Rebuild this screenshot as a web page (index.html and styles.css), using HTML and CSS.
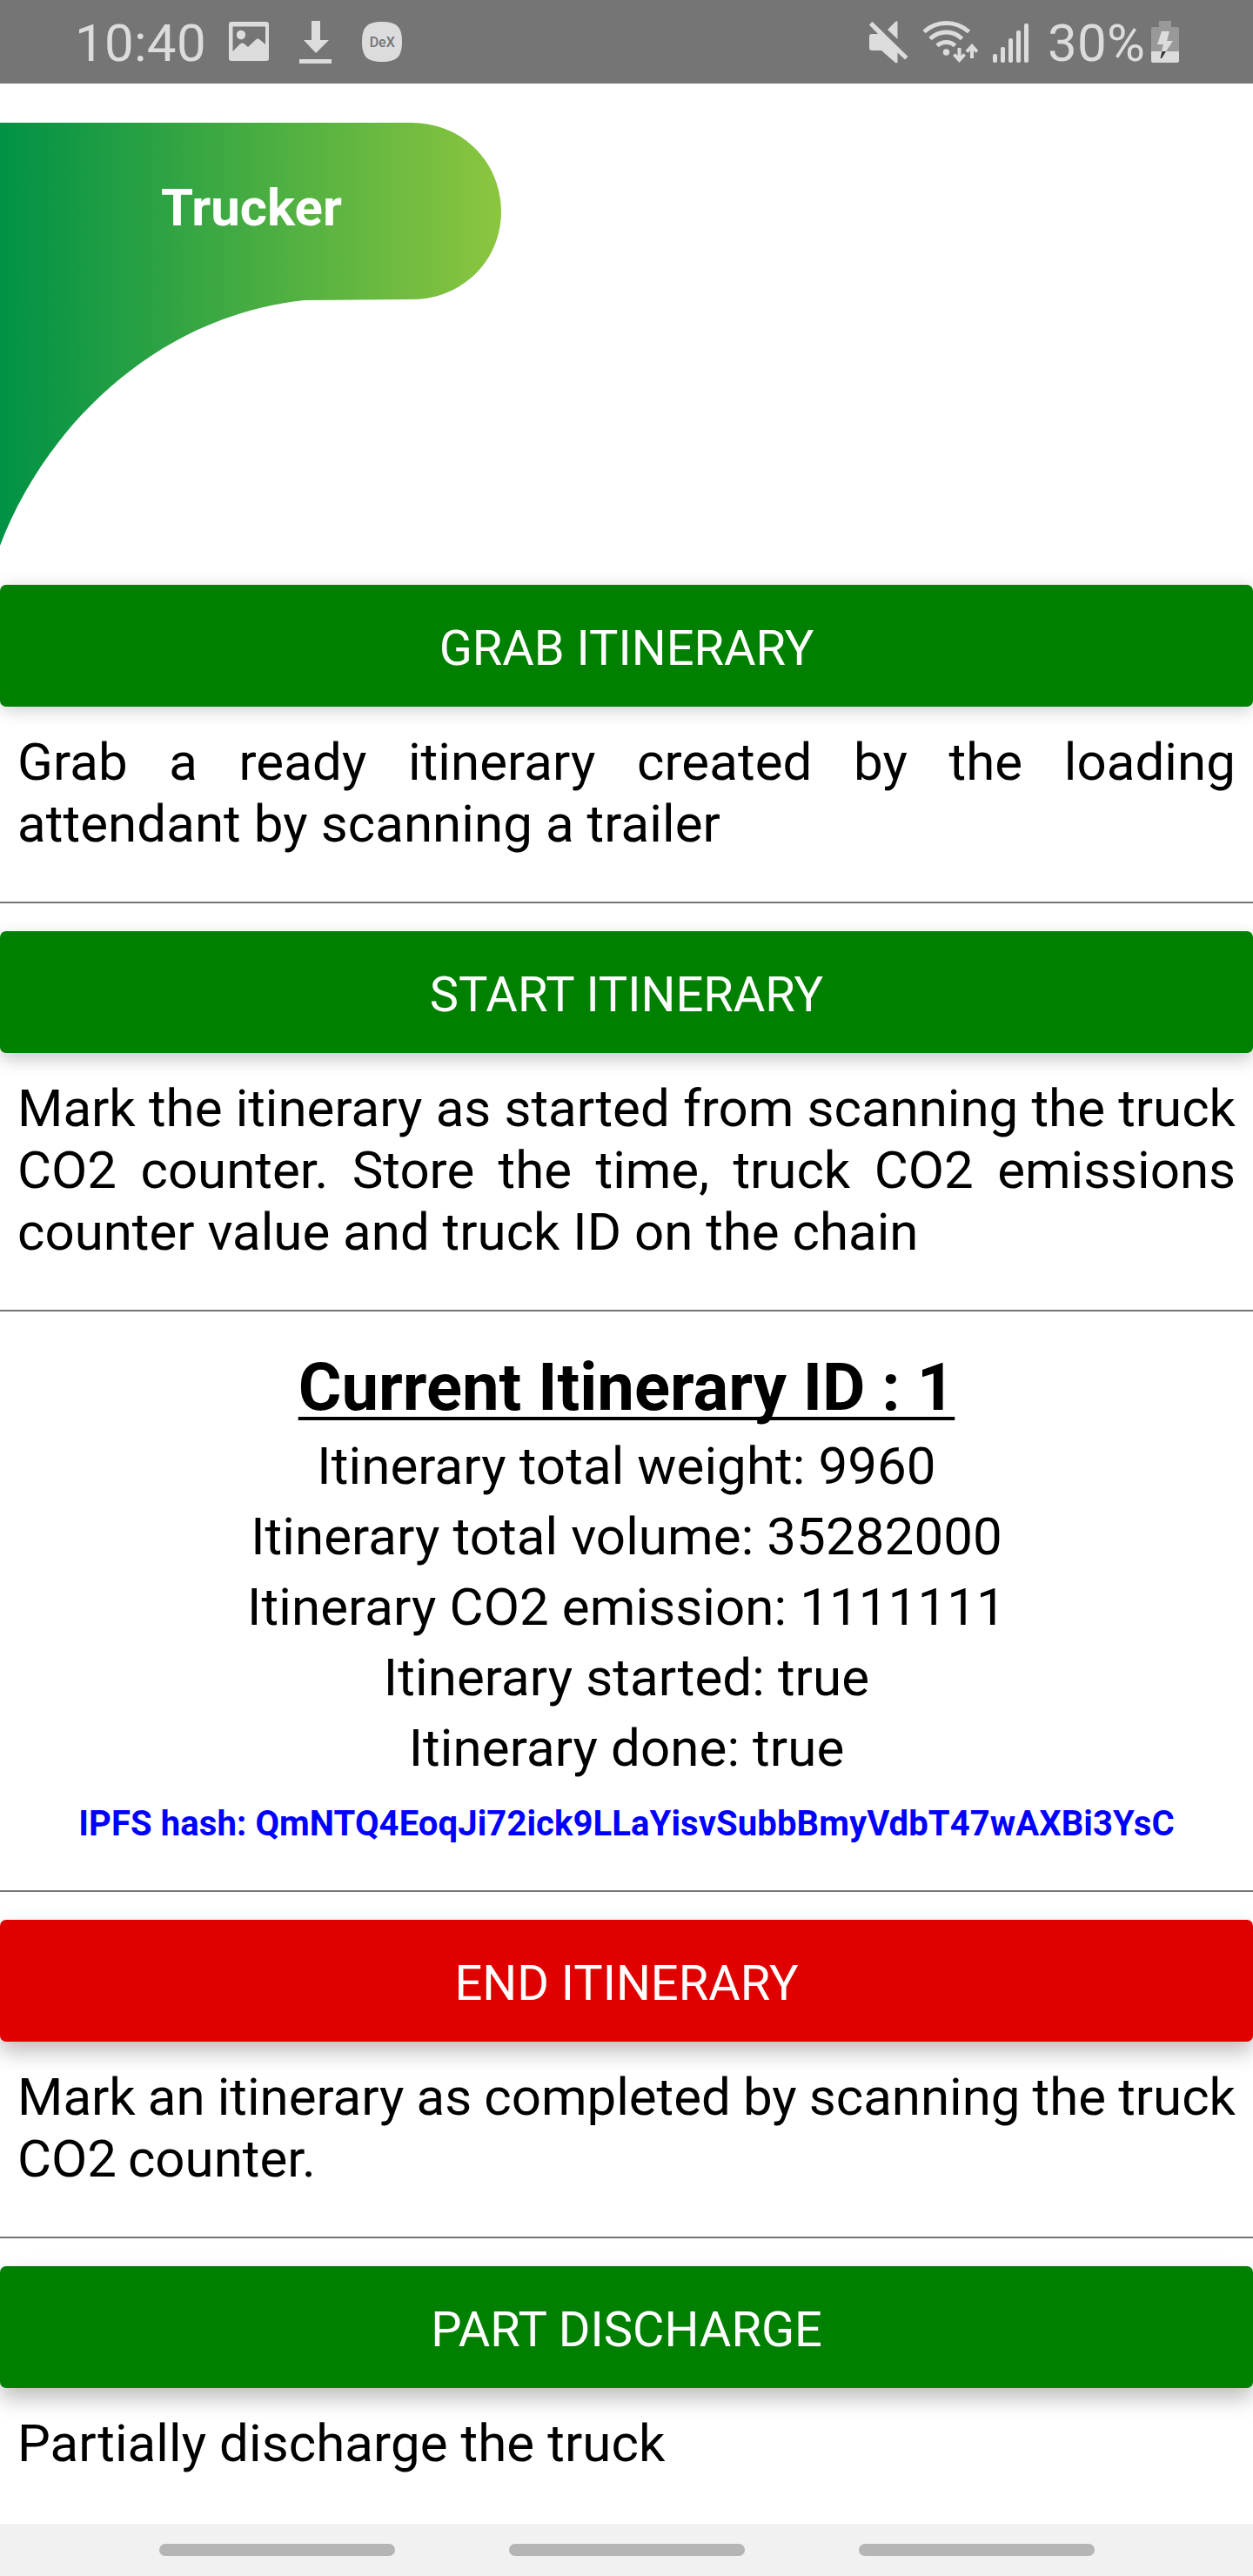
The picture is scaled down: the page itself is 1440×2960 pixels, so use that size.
FILE: index.html
```html
<!DOCTYPE html>
<html lang="en">
<head>
<meta charset="utf-8">
<title>Trucker</title>
<link rel="stylesheet" href="styles.css">
</head>
<body>
<header class="status">
  <span class="clock">10:40</span>
  <svg class="icon-picture" width="48" height="48" viewBox="0 0 48 48"><path fill="currentColor" fill-rule="evenodd" d="M4 1h40q3 0 3 3v39q0 3-3 3H4q-3 0-3-3V4q0-3 3-3zM5.500 6.500V35L14 26.500q2.500-2 5 0L23 30 32 21.500q2.500-2 4.500 0L43 27V6.500z"/><circle cx="15" cy="16" r="5.200" fill="currentColor"/></svg>
  <svg class="icon-download" width="38" height="50" viewBox="0 0 38 50"><path fill="currentColor" d="M14 0h10v22h10L19 37 5 22h9zM0 44h37v5H0z"/></svg>
  <svg class="icon-dex" width="48" height="48" viewBox="0 0 48 48"><path fill="currentColor" d="M24 1C41 1 47 7 47 24S41 47 24 47 1 41 1 24 7 1 24 1z"/><text class="dex-label" x="24.200" y="30" text-anchor="middle">DeX</text></svg>
  <svg class="icon-mute" width="46" height="50" viewBox="0 0 46 50"><g fill="currentColor"><path d="M1 18q0-3 3-3h7L0.800 4.500 4.500 1 45.500 41 42 44.500 33.500 36.500V47.500q-1 1.500-2.500 .500L15 34H4q-3 0-3-3zM22 10 31 1q2.500-1.500 2.500 .500V21z"/></g></svg>
  <svg class="icon-wifi" width="64" height="50" viewBox="0 0 64 50"><g fill="none" stroke="currentColor" stroke-width="4.800"><path d="M2 12.500Q13 2.500 27.500 2.500T53.500 12.500M9 20.500Q17 13 27.500 13T45.500 20.500M17 28.500Q21.500 24.500 27.500 24.500T37.500 28.500"/><path stroke-width="4" d="M42.500 31v14M36.500 38.500l6 6.500 6-6.500M57 43V29M51 35.500l6-6.500 6 6.500"/></g><circle cx="27.500" cy="36" r="3.700" fill="currentColor"/></svg>
  <svg class="icon-signal" width="42" height="46" viewBox="0 0 42 46"><g fill="currentColor"><rect x="0" y="35" width="5" height="10" rx="2"/><rect x="9" y="27" width="5" height="18" rx="2"/><rect x="18" y="17" width="5" height="28" rx="2"/><rect x="27" y="8" width="5" height="37" rx="2"/><rect x="36" y="0" width="5" height="45" rx="2"/></g></svg>
  <span class="charge">30%</span>
  <svg class="icon-battery" width="32" height="48" viewBox="0 0 32 48"><path fill="#999" d="M9 0h14v7h7q2 0 2 2v27H0V9q0-2 2-2h7z"/><path fill="currentColor" d="M0 35h32v11q0 2-2 2H2q-2 0-2-2z"/><path fill="currentColor" d="M12 12h9l-3 11h7l-8 12h-5l2-8H7z"/><path fill="#333" d="M12.500 35h4.500L12 43h-1.500z"/></svg>
</header>

<main>
  <div class="banner">
    <svg width="576" height="488" viewBox="0 0 576 488">
      <defs><linearGradient id="leaf"><stop offset="0" stop-color="#009245"/><stop offset="1" stop-color="#8cc63f"/></linearGradient></defs>
      <path fill="url(#leaf)" d="M0 0H473C532 0 576 46 576 102S532 203 473 203L350 204C180 222 52 349 0 486z"/>
    </svg>
    <h1 class="role">Trucker</h1>
  </div>

  <section class="action">
    <button class="button button-low">GRAB ITINERARY</button>
    <p class="hint">Grab a ready itinerary created by the loading attendant by scanning a trailer</p>
  </section>
  <section class="action">
    <button class="button button-mid">START ITINERARY</button>
    <p class="hint hint-long">Mark the itinerary as started from scanning the truck CO2 counter. Store the time, truck CO2 emissions counter value and truck ID on the chain</p>
  </section>
  <section class="details">
    <h2 class="title">Current Itinerary ID : 1</h2>
    <p>Itinerary total weight: 9960</p>
    <p>Itinerary total volume: 35282000</p>
    <p>Itinerary CO2 emission: 1111111</p>
    <p>Itinerary started: true</p>
    <p>Itinerary done: true</p>
    <a class="hash">IPFS hash: QmNTQ4EoqJi72ick9LLaYisvSubbBmyVdbT47wAXBi3YsC</a>
  </section>
  <section class="action">
    <button class="button button-end">END ITINERARY</button>
    <p class="hint hint-tight">Mark an itinerary as completed by scanning the truck CO2 counter.</p>
  </section>
  <section class="action">
    <button class="button">PART DISCHARGE</button>
    <p class="hint">Partially discharge the truck</p>
  </section>
</main>

<nav class="navbar"><span></span><span></span><span></span></nav>
</body>
</html>
```

FILE: styles.css
```css
* { box-sizing: border-box; }
body {
  margin: 0;
  width: 1440px;
  height: 2960px;
  overflow: hidden;
  display: flex;
  flex-direction: column;
  background: #fff;
  color: #000;
  font-family: Roboto, sans-serif;
}
h1, h2, p { margin: 0; font-weight: 400; }
svg { display: block; flex: none; }

.status {
  height: 96px;
  flex: none;
  display: flex;
  align-items: flex-start;
  padding-left: 86px;
  background: #757575;
  color: #dcdcdc;
  font-size: 60px;
  line-height: 70px;
}
.clock { width: 176px; margin-top: 15px; letter-spacing: .3px; }
.icon-picture { margin-top: 24px; }
.icon-download { margin: 24px 0 0 34px; }
.icon-dex { margin: 24px 0 0 33px; }
.dex-label { font: 500 16px Roboto, sans-serif; fill: #757575; }
.icon-mute { margin: 24px 0 0 auto; }
.icon-wifi { margin: 24px 0 0 16px; }
.icon-signal { margin: 27px 0 0 17px; }
.charge { width: 118px; margin: 15px 0 0 21px; letter-spacing: .3px; }
.icon-battery { margin: 24px 85px 0 1px; }

main { flex: 1; min-height: 0; overflow: hidden; }

.banner {
  display: grid;
  height: 576px;
  padding-top: 45px;
}
.banner > * { grid-area: 1 / 1; }
.role {
  width: 578px;
  padding-top: 62px;
  text-align: center;
  color: #fff;
  font-size: 60px;
  font-weight: 700;
  line-height: 71px;
}

.action { padding-bottom: 54px; border-bottom: 2px solid #757575; margin-bottom: 32px; }
.action:last-child { border-bottom: 0; }
.button {
  display: block;
  width: 100%;
  height: 140px;
  padding: 6px 0 0;
  border: 0;
  border-radius: 7px;
  background: #008000;
  box-shadow: 0 12px 24px rgba(0, 0, 0, .26);
  color: #fff;
  font: 400 56px/66px Roboto, sans-serif;
}
.button-low { box-shadow: 0 4px 20px rgba(0, 0, 0, .2); }
.button-mid { box-shadow: 0 7px 20px rgba(0, 0, 0, .22); }
.button-end { background: #e10000; }
.hint {
  margin-top: 28px;
  padding: 0 20px;
  font-size: 60px;
  line-height: 71px;
  letter-spacing: .08px;
  text-align: justify;
}
.hint-long { letter-spacing: 0; }
.hint-tight { letter-spacing: 0; word-spacing: -2px; }

.details {
  display: flex;
  flex-direction: column;
  align-items: center;
  margin-top: -32px;
  margin-bottom: 32px;
  padding: 42px 0 53px;
  border-bottom: 2px solid #757575;
  font-size: 60px;
  line-height: 81px;
  letter-spacing: .1px;
}
.title {
  margin-bottom: 5px;
  font-size: 76px;
  font-weight: 700;
  line-height: 90px;
  letter-spacing: 0;
  text-decoration: underline;
  text-decoration-thickness: 4px;
  text-underline-offset: 8px;
  text-decoration-skip-ink: none;
}
.hash {
  margin-top: 23px;
  color: #00f;
  font-size: 40px;
  font-weight: 700;
  line-height: 47px;
}

.navbar {
  height: 60px;
  flex: none;
  display: flex;
  justify-content: center;
  gap: 131px;
  padding-top: 23px;
  background: #f1f1f1;
}
.navbar span { width: 271px; height: 14px; border-radius: 7px; background: #b5b5b5; }
```
